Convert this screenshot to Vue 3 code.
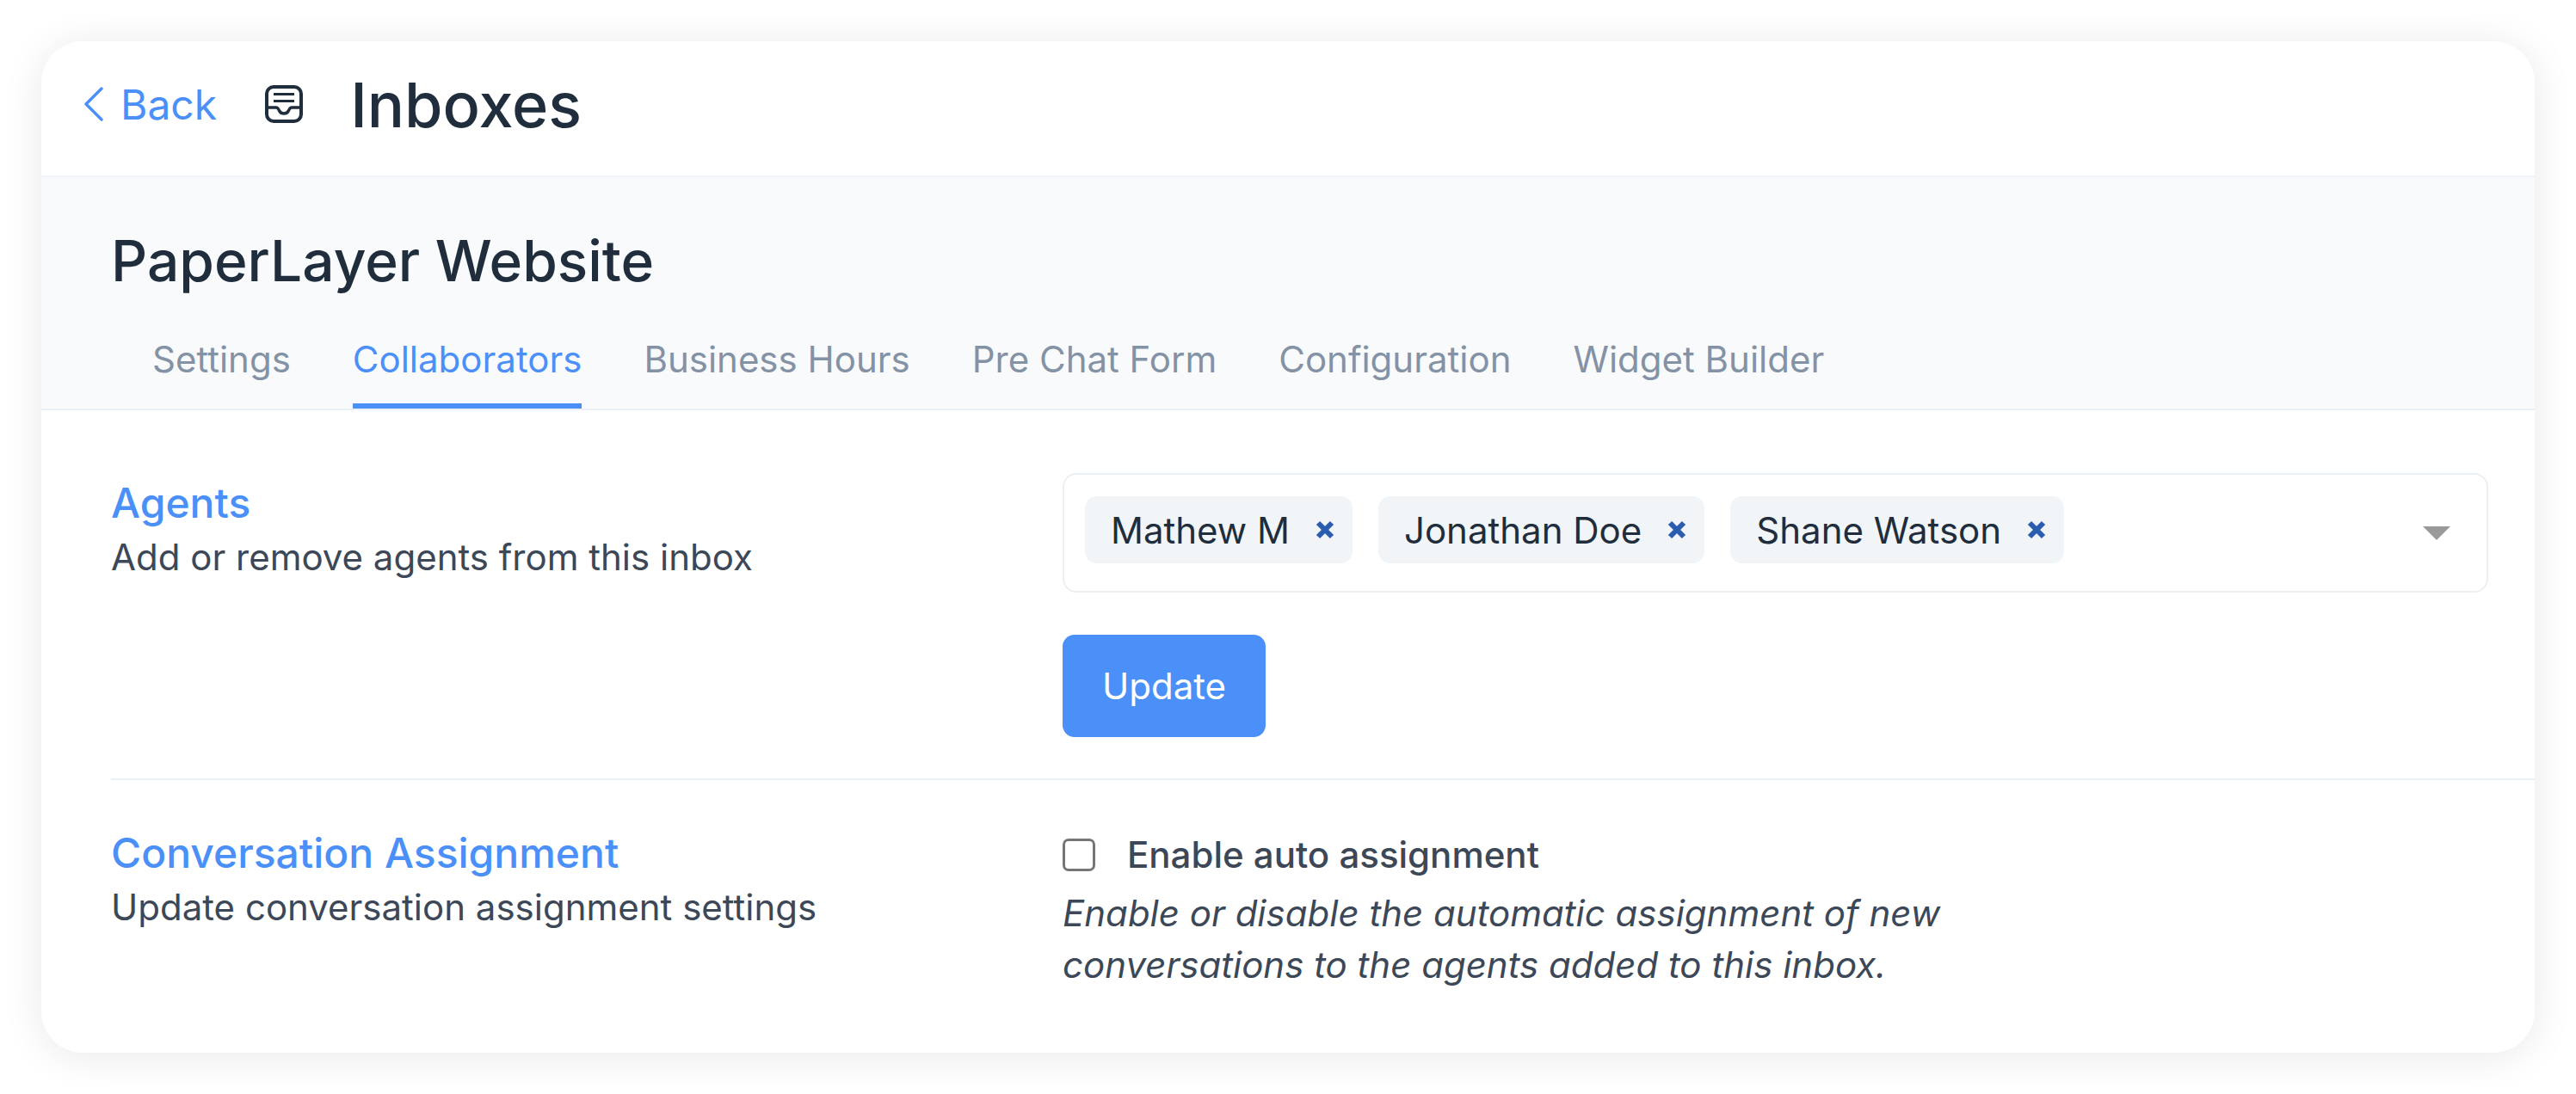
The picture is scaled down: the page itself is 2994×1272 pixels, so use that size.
<script setup>
const tabs = [
  { label: "Settings" },
  { label: "Collaborators", active: true },
  { label: "Business Hours" },
  { label: "Pre Chat Form" },
  { label: "Configuration" },
  { label: "Widget Builder" },
];
const agents = ["Mathew M", "Jonathan Doe", "Shane Watson"];
</script>

<template>
  <div class="page">
    <div class="card">
      <header class="topbar">
        <a class="back">
          <svg class="chevron" viewBox="0 0 22 40" fill="none">
            <path d="M20 2 2 20l18 18" stroke="currentColor" stroke-width="3.4" stroke-linecap="round" stroke-linejoin="round" />
          </svg>
          <span>Back</span>
        </a>
        <svg class="inbox-icon" viewBox="0 0 44 44" fill="none" stroke="#1f2d3d" stroke-width="4">
          <rect x="2" y="2" width="40" height="40" rx="8" />
          <path d="M10 10.5h24M10 18.5h24" stroke-width="3" />
          <path d="M2 26h11c2 0 2.500 1.500 3.500 3.500 1 2.500 3 3.500 5.500 3.500s4.500-1 5.500-3.500C28.500 27.500 29 26 31 26h11" stroke-width="3.400" />
        </svg>
        <h1 class="page-title">Inboxes</h1>
      </header>

      <section class="inbox-head">
        <h2 class="inbox-name">PaperLayer Website</h2>
        <nav class="tabs">
          <a v-for="tab in tabs" :key="tab.label" class="tab" :class="{ active: tab.active }">{{ tab.label }}</a>
        </nav>
      </section>

      <section class="row row-agents">
        <div class="row-info">
          <h3 class="row-title">Agents</h3>
          <p class="row-desc">Add or remove agents from this inbox</p>
        </div>
        <div class="row-body">
          <div class="multiselect">
            <span v-for="agent in agents" :key="agent" class="chip">
              {{ agent }}
              <svg class="chip-x" viewBox="0 0 22 22" fill="none">
                <path d="M3 3l16 16M19 3 3 19" stroke="#2a5cb0" stroke-width="6" />
              </svg>
            </span>
            <i class="caret"></i>
          </div>
          <button class="update">Update</button>
        </div>
      </section>

      <section class="row row-assign">
        <div class="row-info">
          <h3 class="row-title">Conversation Assignment</h3>
          <p class="row-desc">Update conversation assignment settings</p>
        </div>
        <div class="row-body">
          <label class="check">
            <span class="box"></span>
            Enable auto assignment
          </label>
          <p class="help">Enable or disable the automatic assignment of new conversations to the agents added to this inbox.</p>
        </div>
      </section>
    </div>
  </div>
</template>

<style>
html, body { background: #fff; }
</style>

<style scoped>
.page {
  padding: 48px;
  font-family: Inter, "Noto Sans", sans-serif;
  color: #1f2d3d;
}
.card {
  background: #fff;
  border-radius: 48px;
  overflow: hidden;
  box-shadow: 0 4px 48px rgba(0, 0, 0, 0.09);
}
.topbar {
  height: 158px;
  box-sizing: border-box;
  border-bottom: 2px solid #f1f4f8;
  padding: 0 0 10px 50px;
  display: flex;
  align-items: center;
}
.back {
  display: flex;
  align-items: center;
  gap: 20px;
  color: #4a90f8;
  font-size: 48px;
}
.chevron { width: 22px; height: 40px; }
.inbox-icon { width: 44px; height: 44px; margin-left: 56px; }
.page-title {
  margin: 0 0 0 55px;
  font-size: 72px;
  font-weight: 500;
}
.inbox-head {
  background: #f9fafc;
  border-bottom: 2px solid #ebf0f5;
  padding: 58px 0 0 81px;
}
.inbox-name {
  margin: 0;
  font-size: 65.8px;
  line-height: 78px;
  font-weight: 500;
}
.tabs {
  display: flex;
  gap: 72px;
  margin-top: 50px;
  padding-left: 48px;
}
.tab {
  font-size: 42px;
  line-height: 52px;
  padding-bottom: 25px;
  color: #8492a6;
  border-bottom: 6px solid transparent;
}
.tab.active {
  color: #4a90f8;
  border-bottom-color: #4a90f8;
}
.row {
  margin-left: 81px;
  display: grid;
  grid-template-columns: 1106px 1fr;
}
.row-agents {
  padding: 73px 54px 48px 0;
  border-bottom: 2px solid #ebf0f5;
}
.row-agents .row-info { padding-top: 7px; }
.row-assign { padding: 57px 54px 72px 0; }
.row-title {
  margin: 0;
  font-size: 48px;
  line-height: 56px;
  font-weight: 500;
  color: #4a90f8;
}
.row-desc {
  margin: 4px 0 0;
  font-size: 42px;
  line-height: 62px;
  color: #3c4858;
}
.multiselect {
  position: relative;
  height: 139px;
  box-sizing: border-box;
  border: 2px solid #ebf0f5;
  border-radius: 16px;
  padding: 25px 0 0 24px;
  display: flex;
  gap: 30px;
  align-items: flex-start;
}
.chip {
  height: 78px;
  display: flex;
  align-items: center;
  padding: 0 21px 0 30px;
  gap: 30px;
  background: #f1f5f8;
  border-radius: 14px;
  font-size: 42px;
}
.chip-x { width: 22px; height: 22px; }
.caret {
  position: absolute;
  right: 42px;
  top: 60px;
  border: 16px solid transparent;
  border-top-color: #999;
  border-bottom-width: 0;
}
.update {
  display: block;
  margin-top: 49px;
  width: 236px;
  height: 119px;
  border: 0;
  border-radius: 14px;
  background: #4a90f8;
  color: #fff;
  font: 400 42px Inter, sans-serif;
}
.check {
  display: flex;
  align-items: center;
  gap: 37px;
  font-size: 42px;
  line-height: 60px;
  font-weight: 500;
  color: #3c4858;
}
.box {
  width: 38px;
  height: 38px;
  box-sizing: border-box;
  border: 3px solid #767676;
  border-radius: 7px;
}
.help {
  margin: 8px 0 0;
  max-width: 1050px;
  font-size: 42px;
  line-height: 60px;
  font-style: italic;
  color: #3c4858;
}
</style>
